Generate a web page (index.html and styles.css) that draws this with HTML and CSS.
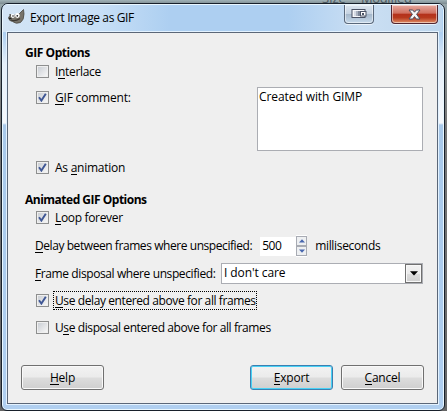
FILE: index.html
```html
<!DOCTYPE html>
<html lang="en">
<head>
<meta charset="utf-8">
<title>Export Image as GIF</title>
<link rel="stylesheet" href="styles.css">
</head>
<body>
<div class="behind"><span class="col-size">Size</span><span class="col-mod">Modified</span></div>
<div class="window">
  <header class="titlebar">
    <svg class="wilber" width="17" height="16" viewBox="0 0 17 16">
      <path d="M2 5 L3 7 Q8 6 11 5 L15.5 0.5 L16 5 Q16 11 12.5 13.5 Q8 15.5 4.5 12.5 Q1 12 .5 9 Q1 7 2 7Z" fill="#77736a" stroke="#4a4740" stroke-width=".8"/>
      <ellipse cx="4.8" cy="7" rx="1.9" ry="2.1" fill="#fff"/>
      <ellipse cx="9.4" cy="6.5" rx="2.3" ry="2.4" fill="#fff"/>
      <circle cx="5" cy="7" r=".8" fill="#222"/><circle cx="9.3" cy="6.8" r=".9" fill="#222"/>
      <path d="M3 11 Q7 13 12 9.5" fill="none" stroke="#3d3832" stroke-width="1.2"/>
      <path d="M1 9.5h2.5" stroke="#222" stroke-width="1.6"/>
    </svg>
    <h1 class="title">Export Image as GIF</h1>
    <div class="caption-btn monitor">
      <svg width="16" height="12" viewBox="0 0 16 12">
        <rect x="1" y="1.5" width="13" height="8" fill="#f5f7fa" stroke="#4b5365"/>
        <path d="M3 3h2v5H3z" fill="#d6dbe4"/><path d="M5 3h2v5H5z" fill="#aab2c0"/><path d="M7 3h2v5H7z" fill="#7d8799"/>
        <rect x="9.5" y="3.5" width="5.5" height="4.5" fill="#fff" stroke="#4b5365"/>
        <path d="M11 5h2v2h-2z" fill="#4b5365"/>
      </svg>
    </div>
    <div class="caption-btn close">
      <svg width="13" height="11" viewBox="0 0 13 11">
        <path d="M1 1h3.7l1.8 2.2L8.3 1H12L8.6 5.3 12 10H8.3L6.5 7.6 4.7 10H1l3.4-4.7z" fill="#f7f7f7" stroke="#4c4f61" stroke-width="1"/>
      </svg>
    </div>
  </header>
  <main class="client">
    <h2 class="head head-gif"><span class="w-gif">GIF Options</span></h2>
    <div class="row interlace"><i class="box"></i><span class="label w-int">I<u>n</u>terlace</span></div>
    <div class="comment-row">
      <div class="row"><i class="box on"><svg width="9" height="9" viewBox="0 0 9 9"><path d="M1 4.2 3.4 7.6 7.8 .8" /></svg></i><span class="label w-com"><u>G</u>IF comment:</span></div>
      <div class="comment"><span class="w-cre">Created with GIMP</span></div>
    </div>
    <div class="row anim"><i class="box on"><svg width="9" height="9" viewBox="0 0 9 9"><path d="M1 4.2 3.4 7.6 7.8 .8" /></svg></i><span class="label w-ani">As <u>a</u>nimation</span></div>
    <h2 class="head head-anim"><span class="w-ago">Animated GIF Options</span></h2>
    <div class="row loop"><i class="box on"><svg width="9" height="9" viewBox="0 0 9 9"><path d="M1 4.2 3.4 7.6 7.8 .8" /></svg></i><span class="label w-loop"><u>L</u>oop forever</span></div>
    <div class="field delay">
      <span class="w-del"><u>D</u>elay between frames where unspecified:</span>
      <div class="spin"><span class="value">500</span><div class="arrows">
        <b><svg width="6" height="4" viewBox="0 0 6 4"><path d="M0 3.5 3 .3 6 3.5z"/></svg></b>
        <b><svg width="6" height="4" viewBox="0 0 6 4"><path d="M0 .5 3 3.7 6 .5z"/></svg></b>
      </div></div>
      <span class="unit w-ms">milliseconds</span>
    </div>
    <div class="field disposal">
      <span class="w-dis"><u>F</u>rame disposal where unspecified:</span>
      <div class="combo"><span class="choice w-idc">I don't care</span><span class="drop"><svg width="8" height="5" viewBox="0 0 8 5"><path d="M0 .2h8L4 4.5z"/></svg></span></div>
    </div>
    <div class="row use-delay"><i class="box on"><svg width="9" height="9" viewBox="0 0 9 9"><path d="M1 4.2 3.4 7.6 7.8 .8" /></svg></i><span class="label focus w-ud"><u>U</u>se delay entered above for all frames</span></div>
    <div class="row use-disp"><i class="box"></i><span class="label w-us">U<u>s</u>e disposal entered above for all frames</span></div>
    <footer class="actions">
      <button class="btn help"><u>H</u>elp</button>
      <button class="btn primary"><u>E</u>xport</button>
      <button class="btn"><u>C</u>ancel</button>
    </footer>
  </main>
</div>
</body>
</html>
```
FILE: styles.css
```css
* { box-sizing: border-box; }
body {
  margin: 0; width: 447px; height: 411px; overflow: hidden; position: relative;
  background: linear-gradient(#98a8ac, #777 30%, #666);
  font: 12px/18px "Open Sans", "Noto Sans", sans-serif; color: #000;
}
u { text-decoration: none; box-shadow: inset 0 -1px #000; display: inline-block; line-height: 15px; }
.behind { position: absolute; left: 0; top: 0; width: 447px; height: 4px; overflow: hidden; background: linear-gradient(#a0b1b6, #7d8b91); color: #4c5961; line-height: 17px; }
.behind span { position: absolute; top: -10px; font-size: 13px; }
.col-size { left: 322px; }
.col-mod { left: 361px; letter-spacing: -.4px; }
.window {
  position: relative; margin: 3px 0 0 1px; width: 444px; height: 408px; padding: 0 6px 5px 5px;
  border: 1px solid #18202b; border-radius: 7px 7px 6px 6px; overflow: hidden;
  box-shadow: inset 0 0 0 1px #e9f7ff;
  background: linear-gradient(#b0d2f2 0, #afd0f1 30px, #e6eff9 60px, #f5f8fc 119px, #a9c9ea 121px, #b0cff0 100%);
}
.titlebar { height: 28px; display: flex; align-items: flex-start; margin: 0 -4px; padding: 0 4px 0 5px;
  border-top: 1px solid #e9f7ff;
  background: linear-gradient(90deg, #d3e4f5 0, #c7dff6 22%, #adcff1 38%, #adcff1 65%, #cbdff3 82%, #bdd6ed 100%); }
.wilber { margin: 4px 0 0 0; flex: none; }
.title { margin: 4px 0 0 5px; font-size: 12px; line-height: 18px; font-weight: 400; letter-spacing: -.38px; white-space: nowrap; }
.caption-btn { height: 19px; border: 1px solid #59687b; border-top: 0; border-radius: 0 0 4px 4px; display: flex; align-items: center; justify-content: center; box-shadow: inset 0 0 0 1px #ffffff80, 0 1px 0 #ffffffa0; }
.monitor { margin-left: auto; width: 30px; background: linear-gradient(#dce5ef, #c5d3e2 48%, #a5b7ca 50%, #c5d9eb); }
.close { margin-left: 17px; width: 47px; border-color: #512530; background: linear-gradient(#e7aaa0, #cf6f5f 46%, #b4301b 50%, #b7391e 70%, #df8d65); }
.client { height: 372px; background: #efefef; border: 1px solid #5b6778; outline: 1px solid #e3f2ff; padding: 10px 14px 0 17px; display: flex; flex-direction: column; white-space: nowrap; }
.head { margin: 0; font-size: 12px; line-height: 20px; height: 18px; font-weight: 700; }
.row { height: 19px; display: flex; align-items: center; padding-left: 11px; }
.interlace { margin-top: 1px; }
.box { width: 13px; height: 13px; flex: none; border: 1px solid #8e8f8f; background: linear-gradient(135deg, #cbcfd5, #f6f6f6) content-box; padding: 1px; display: grid; place-items: center; background-color: #f6f6f6; }
.box path { fill: none; stroke: #3f5795; stroke-width: 1.9; }
.label { margin-left: 6px; }
.comment-row { margin-top: 6px; height: 64px; display: flex; justify-content: space-between; }
.comment-row .row { margin-top: 1px; }
.comment { width: 166px; height: 64px; border: 1px solid #abadb3; background: #fff; padding: 0 1px; }
.anim { margin-top: 7px; }
.head-anim { margin-top: 13px; }
.field { display: flex; align-items: center; padding-left: 10px; }
.delay { margin-top: 8px; height: 22px; }
.spin { display: flex; height: 21px; margin-left: 8px; width: 47px; align-items: center; }
.value { width: 36px; height: 19px; background: #fff; padding-left: 2px; letter-spacing: -.5px; }
.arrows { width: 11px; height: 22px; background: #fff; display: grid; gap: 0; padding: 1px 0; }
.arrows b { border: 1px solid #a8abb3; background: #eef0f2; display: grid; place-items: center; }
.arrows path { fill: #4867ae; }
.unit { margin-left: 8px; }
.disposal { margin-top: 6px; height: 21px; }
.combo { margin-left: auto; width: 202px; height: 21px; border: 1px solid #abadb3; background: #fff; display: flex; justify-content: space-between; }
.choice { padding-left: 2px; }
.drop { width: 17px; height: 19px; border: 1px solid #707070; background: linear-gradient(#f2f2f2, #ebebeb 50%, #ddd 51%, #cfcfcf); box-shadow: inset 0 0 0 1px #f8f8f8; display: grid; place-items: center; }
.use-delay { margin-top: 7px; }
.use-disp { margin-top: 8px; }
.focus { border: 1px dotted #000; margin-left: 4px; padding: 0 1px; height: 19px; line-height: 17px; width: 204px; }
.actions { display: flex; margin: 28px -1px 0 -4px; gap: 8px; }
.btn { width: 83px; height: 25px; padding: 1px 0 0; font: inherit; line-height: 18px; letter-spacing: -.2px; color: #000; border: 1px solid #707070; border-radius: 3px; background: linear-gradient(#f2f2f2, #ebebeb 49%, #ddd 51%, #cfcfcf); box-shadow: inset 0 0 0 1px #f9f9f9; }
.help { margin-right: auto; }
.primary { border-color: #3c7fb1; box-shadow: inset 0 0 0 1px #48d1f5; }

/* Tracking per string, to keep the compact dialog widths */
.w-gif { letter-spacing: -.45px; }
.w-ago { letter-spacing: -.5px; }
.w-int, .w-loop, .w-ms { letter-spacing: -.33px; }
.w-com { letter-spacing: -.2px; }
.w-ani { letter-spacing: -.25px; }
.w-del { letter-spacing: -.43px; }
.w-dis, .w-ud, .w-us { letter-spacing: -.4px; }
.w-cre, .w-idc { letter-spacing: -.08px; }
```
